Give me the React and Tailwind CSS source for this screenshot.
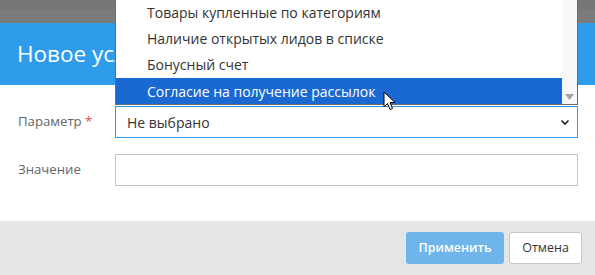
import React from 'react';

const options = [
  'Товары купленные по категориям',
  'Наличие открытых лидов в списке',
  'Бонусный счет',
  'Согласие на получение рассылок',
];

export default function App() {
  return (
    <div
      className="relative w-[595px] h-[275px] overflow-hidden bg-white"
      style={{ fontFamily: '"Open Sans", "Noto Sans", sans-serif' }}
    >
      <div className="h-[10px] bg-[#767676]" />
      <div className="h-[13px] bg-[#7b7b7b]" />

      <div className="h-[62px] bg-[#2e9ceb] flex items-center px-[17px]">
        <h1 className="text-[22.5px] text-white leading-none">Новое условие</h1>
      </div>

      <div className="h-[136px] pt-[21px]">
        <div className="flex items-center h-[32px]">
          <label className="w-[115px] pl-[18px] text-[13.2px] text-[#666]">
            Параметр <span className="text-[#e84c4c]">*</span>
          </label>
          <div className="w-[463px] h-[32px] border border-[#3399e6] flex items-center justify-between pl-[11px] pr-[6px] text-[14px] text-[#333]">
            <span>Не выбрано</span>
            <svg width="12" height="12" viewBox="0 0 12 12">
              <path d="M2.5 4.5 L6 8 L9.5 4.5" fill="none" stroke="#222" strokeWidth="1.6" />
            </svg>
          </div>
        </div>
        <div className="flex items-center h-[32px] mt-[16px]">
          <label className="w-[115px] pl-[18px] text-[13.2px] text-[#666]">Значение</label>
          <div className="w-[463px] h-[32px] border border-[#c4c4c4]" />
        </div>
      </div>

      <div className="h-[54px] bg-[#e4e5e7] flex justify-end items-center pr-[13px] gap-[5px]">
        <button className="w-[98px] h-[32px] rounded-[3px] bg-[#6db5ea] text-white text-[12.5px] font-semibold">
          Применить
        </button>
        <button className="w-[73px] h-[32px] rounded-[3px] bg-white border border-[#c8c8c8] text-[#333] text-[12.5px]">
          Отмена
        </button>
      </div>

      {/* open dropdown list */}
      <div className="absolute left-[115px] top-0 w-[463px] h-[105px] bg-white border-l border-r border-b border-[#6b6b6b] flex">
        <ul className="flex-1 -mt-[1px]">
          {options.map((o, i) => (
            <li
              key={o}
              className={`h-[26px] flex items-center pl-[31px] text-[14px] ${
                i === 3 ? 'bg-[#1a69d3] text-white mt-[1px]' : 'text-[#333]'
              }`}
            >
              {o}
            </li>
          ))}
        </ul>
        <div className="w-[15px] bg-[#f7f7f7] flex flex-col justify-end items-center pb-[4px]">
          <svg width="9" height="6" viewBox="0 0 9 6">
            <path d="M0 0 H9 L4.5 6 Z" fill="#a3a3a3" />
          </svg>
        </div>
      </div>

      {/* mouse cursor */}
      <svg className="absolute left-[383px] top-[91px]" width="13" height="20" viewBox="0 0 13 20">
        <path
          d="M1 1 L1 16 L4.5 12.5 L7 18.5 L9.5 17.5 L7 11.5 L12 11.5 Z"
          fill="white"
          stroke="black"
          strokeWidth="1"
          strokeLinejoin="round"
        />
      </svg>
    </div>
  );
}
